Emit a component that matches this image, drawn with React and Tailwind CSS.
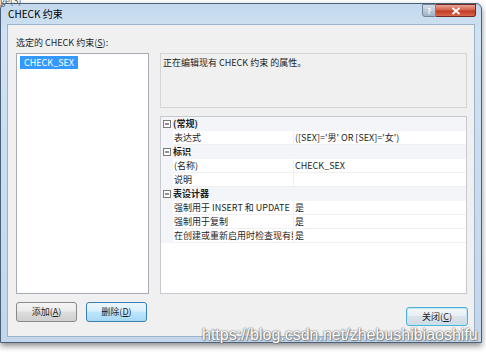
const rows = [
  { cat: "(常规)" },
  { name: "表达式", value: "([SEX]='男' OR [SEX]='女')" },
  { cat: "标识" },
  { name: "(名称)", value: "CHECK_SEX" },
  { name: "说明", value: "" },
  { cat: "表设计器" },
  { name: "强制用于 INSERT 和 UPDATE", value: "是" },
  { name: "强制用于复制", value: "是" },
  { name: "在创建或重新启用时检查现有数据", value: "是" },
];

const MinusBox = () => (
  <svg width="8" height="8" viewBox="0 0 8 8" className="block">
    <rect x="0.5" y="0.5" width="7" height="7" fill="#fff" stroke="#7a7a7a" />
    <line x1="2" y1="4" x2="6" y2="4" stroke="#222" />
  </svg>
);

const Button = ({ children, className }) => (
  <button
    type="button"
    className={`flex items-center justify-center rounded-[3px] border text-[9px] text-[#1e1e1e] ${className}`}
  >
    {children}
  </button>
);

export default function App() {
  return (
    <div className="relative h-[355px] w-[486px] overflow-hidden bg-white font-['Noto_Sans_CJK_SC','Noto_Sans',sans-serif] text-[#1e1e1e]">
      <div className="absolute left-0 top-[-6px] text-[9px] text-[#555]">ge(S)</div>

      <div className="mt-[3px] flex h-[340px] w-[482px] flex-col rounded-t-[6px] border border-[#4d6079] bg-[linear-gradient(180deg,#c3d8ee_0%,#d0e2f3_8%,#c2d7ec_100%)] shadow-[0_3px_6px_rgba(0,0,0,0.45)]">
        {/* title bar */}
        <div className="flex h-[20px] items-start">
          <div className="pl-[7px] pt-[4px] text-[10px] leading-[12px] text-black">CHECK 约束</div>
          <div className="ml-auto mr-[5px] flex h-[13px]">
            <div className="flex w-[14px] items-center justify-center rounded-bl-[3px] border border-[#6f8296] bg-[linear-gradient(180deg,#d3dde8,#a3b4c6)] text-[8px] font-bold leading-none text-white">
              ?
            </div>
            <div className="flex w-[40px] items-center justify-center rounded-br-[3px] border border-l-0 border-[#6b2a22] bg-[linear-gradient(180deg,#e8a493_0%,#d5624d_45%,#c23a23_55%,#d9674c_100%)]">
              <svg width="10" height="8" viewBox="0 0 10 8">
                <path d="M1.5 1 L8.5 7 M8.5 1 L1.5 7" stroke="#fff" strokeWidth="1.8" />
              </svg>
            </div>
          </div>
        </div>

        {/* client area */}
        <div className="mx-[6px] flex h-[313px] flex-col border border-[#9db2c8] bg-[#f0f0f0] pl-[8px] pr-[6px]">
          <div className="mt-[12px] h-[12px] text-[9px] leading-[12px]">
            选定的 CHECK 约束(<span className="underline">S</span>):
          </div>

          <div className="mt-[4px] flex h-[241px] gap-[11px]">
            <div className="w-[133px] border border-[#a5acb5] bg-white pl-[3px] pt-[2px]">
              <div className="h-[13px] w-fit bg-[#3399ff] px-[4px] text-[9px] leading-[13px] text-white">
                CHECK_SEX
              </div>
            </div>

            <div className="flex w-[307px] flex-col">
              <div className="h-[55px] border border-[#d5d5d5] bg-[#f0f0f0] pl-[2px] pt-[3px] text-[9px] leading-[12px]">
                正在编辑现有 CHECK 约束 的属性。
              </div>
              <div className="mt-[8px] flex-1 border border-[#c6c9cd] bg-white">
                {rows.map((r, i) =>
                  r.cat ? (
                    <div key={i} className="flex h-[14px] items-center bg-[#f3f5f9] text-[9px]">
                      <div className="flex w-[12px] justify-center">
                        <MinusBox />
                      </div>
                      <span className="font-bold leading-[14px]">{r.cat}</span>
                    </div>
                  ) : (
                    <div key={i} className="flex h-[14px] text-[9px] leading-[13px]">
                      <div className="w-[12px] bg-[#f3f5f9]" />
                      <div className="w-[121px] overflow-hidden whitespace-nowrap border-b border-r border-[#f0f0f0] pl-[1px] pr-[2px] text-clip">
                        {r.name}
                      </div>
                      <div className="flex-1 border-b border-[#f0f0f0] pl-[1px]">{r.value}</div>
                    </div>
                  )
                )}
              </div>
            </div>
          </div>

          <div className="mt-[8px] flex">
            <Button className="h-[20px] w-[61px] border-[#8a8a8a] bg-[linear-gradient(180deg,#f4f4f4_0%,#ebebeb_45%,#dddddd_50%,#cfcfcf_100%)]">
              添加(<span className="underline">A</span>)
            </Button>
            <Button className="ml-[9px] h-[20px] w-[61px] border-[#3c7fb1] bg-[linear-gradient(180deg,#eaf6fd_0%,#d9f0fc_45%,#bee6fd_50%,#a7d9f5_100%)]">
              删除(<span className="underline">D</span>)
            </Button>
            <Button className="ml-auto mt-[5px] h-[19px] w-[62px] border-[#4fb0d8] bg-[linear-gradient(180deg,#f5f8fa_0%,#e8eef3_45%,#dbe3ea_50%,#cfd9e2_100%)] shadow-[inset_0_0_0_1px_#bfe6f7]">
              关闭(<span className="underline">C</span>)
            </Button>
          </div>
        </div>
      </div>

      <div className="absolute left-[202px] top-[325px] font-['Liberation_Sans',sans-serif] text-[16px] leading-[20px] text-white [text-shadow:0_0_1px_#666,0_0_2px_#777,1px_1px_1px_#888]">
        https://blog.csdn.net/zhebushibiaoshifu
      </div>
    </div>
  );
}
